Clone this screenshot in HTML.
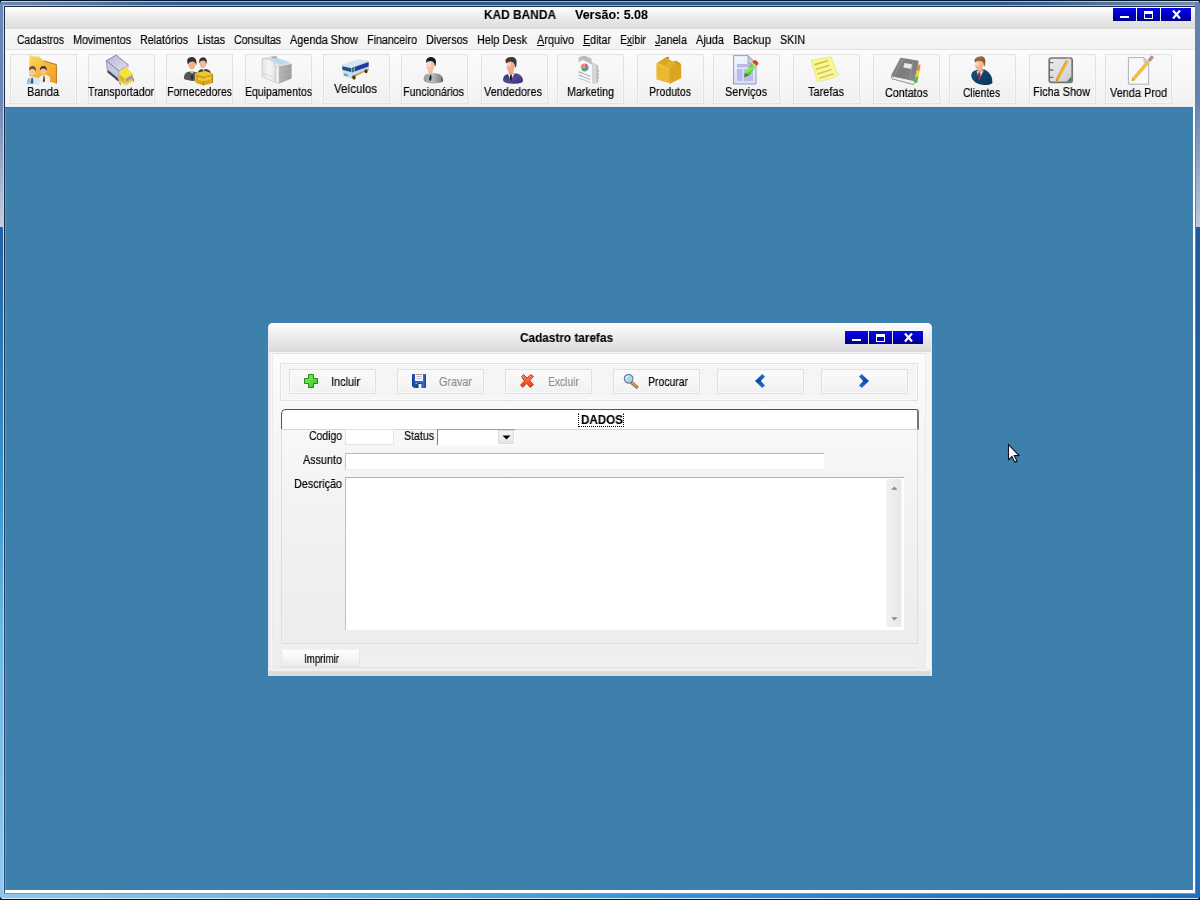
<!DOCTYPE html>
<html><head><meta charset="utf-8"><title>KAD BANDA</title>
<style>
html,body{margin:0;padding:0}
body{width:1200px;height:900px;overflow:hidden;position:relative;background:#3c80ab;font-family:"Liberation Sans",sans-serif;font-size:11px;color:#000}
.a{position:absolute}
.t{position:absolute;white-space:nowrap;line-height:1;height:1em;transform-origin:0 0;will-change:transform;-webkit-text-stroke:0.18px currentColor}
u{text-decoration:underline;text-underline-offset:1px}
.cb{height:13px;background:linear-gradient(#0808f0 0,#0000c8 45%,#00008c 100%)}
.cb i,.cb svg{display:block}
.tb{width:65px;height:48px;border:1px solid #e1e1e1;background:linear-gradient(#fafafa,#f4f4f4 60%,#efefef);box-shadow:inset 0 0 0 1px #f8f8f8}
.bt{width:85px;height:23px;border:1px solid #e0e0e0;background:linear-gradient(#fafafa,#f5f5f5 60%,#f0f0f0);box-shadow:inset 0 0 0 1px #f9f9f9}
</style></head><body>

<!-- outer window frame -->
<div class="a" style="left:0;top:0;width:1200px;height:7px;background:linear-gradient(90deg,#7088a8 0,#5c7aa2 6%,#3a6294 12%,#28588c 18%,#28588c 82%,#3a6294 88%,#5c7aa2 94%,#7890b0 100%)"></div>
<div class="a" style="left:0;top:0;width:1200px;height:1px;background:#06182c"></div>
<div class="a" style="left:1px;top:1px;width:1198px;height:1px;background:linear-gradient(90deg,#c4d4f0 0,#98b6da 18%,#94b4d8 82%,#c0d0ec 100%)"></div>
<div class="a" style="left:3px;top:5px;width:1193px;height:1px;background:linear-gradient(90deg,#b4c8e8 0,#8cb4e4 18%,#8cb4e4 82%,#b0c4e4 100%)"></div>
<div class="a" style="left:4px;top:6px;width:1191px;height:1px;background:#1c2c48"></div>
<!-- left border -->
<div class="a" style="left:0;top:2px;width:3px;height:225px;background:linear-gradient(#6a86b4 0,#6a86b4 98px,#c4cee0 225px)"></div>
<div class="a" style="left:0;top:227px;width:3px;height:671px;background:linear-gradient(#2060a8 0,#3a9ad0 273px,#6cb8e0 403px,#90c8f0 100%)"></div>
<div class="a" style="left:3px;top:6px;width:1px;height:892px;background:#c0d8f8"></div>
<div class="a" style="left:4px;top:7px;width:1px;height:887px;background:linear-gradient(#1c2c48 0,#1c2c48 220px,#2c4c7c 100%)"></div>
<!-- right border -->
<div class="a" style="left:1195px;top:2px;width:5px;height:225px;background:linear-gradient(#6482b0 0,#6482b0 98px,#bcc8de 225px)"></div>
<div class="a" style="left:1195px;top:227px;width:5px;height:671px;background:linear-gradient(#1c5a9c,#2062a8 200px,#2070c0)"></div>
<div class="a" style="left:1195px;top:107px;width:1px;height:787px;background:#6880a0"></div>
<!-- bottom border -->
<div class="a" style="left:0;top:893px;width:1200px;height:5px;background:linear-gradient(90deg,#8cc8ea 0,#68b8e4 25%,#3c98d8 50%,#2478c8 80%,#2070c0)"></div>
<div class="a" style="left:4px;top:893px;width:1192px;height:1px;background:#8098b0"></div>
<div class="a" style="left:2px;top:898px;width:1196px;height:1px;background:#d8e8f8"></div>
<div class="a" style="left:0;top:899px;width:1200px;height:1px;background:#0c1424"></div>
<!-- MDI client -->
<div class="a" style="left:5px;top:107px;width:1190px;height:786px;background:#fff"></div>
<div class="a" style="left:5px;top:107px;width:1188px;height:783px;background:#6c92b0"></div>
<div class="a" style="left:5px;top:107px;width:1188px;height:1px;background:#4e7392"></div>
<div class="a" style="left:6px;top:108px;width:1187px;height:782px;background:#3c80ab"></div>
<!-- title bar -->
<div class="a" style="left:5px;top:7px;width:1190px;height:22px;background:linear-gradient(#ffffff 0,#f4f4f4 25%,#e4e4e4 70%,#dcdcdc 100%)"></div>
<span class="t" style="left:483.5px;top:9.42px;font-size:12.5px;transform:scaleX(0.9513);font-weight:bold;-webkit-text-stroke:0.1px currentColor;color:#000">KAD BANDA</span>
<span class="t" style="left:574.5px;top:9.42px;font-size:12.5px;transform:scaleX(1.0005);font-weight:bold;-webkit-text-stroke:0.1px currentColor;color:#000">Versão: 5.08</span>
<!-- caption buttons -->
<div class="a cb" style="left:1113px;top:8px;width:23px"><i class="a" style="left:7px;top:8px;width:9px;height:2px;background:#fff"></i></div>
<div class="a cb" style="left:1137px;top:8px;width:23px"><i class="a" style="left:7px;top:3px;width:7px;height:4px;border:1px solid #fff;border-top-width:3px"></i></div>
<div class="a cb" style="left:1161px;top:8px;width:30px"><svg class="a" style="left:11px;top:2px" width="9" height="9" viewBox="0 0 9 9"><path d="M1 0.5L8 8.5M8 0.5L1 8.5" stroke="#fff" stroke-width="2.2"/></svg></div>
<!-- menu bar -->
<div class="a" style="left:5px;top:29px;width:1190px;height:21px;background:linear-gradient(#f8f8f8,#f1f1f1)"></div>
<div class="a" style="left:5px;top:49px;width:1190px;height:1px;background:#e2e2e2"></div>
<span class="t" style="left:16.5px;top:34.42px;font-size:12.5px;transform:scaleX(0.8250);color:#000">Cadastros</span>
<span class="t" style="left:72.5px;top:34.42px;font-size:12.5px;transform:scaleX(0.8608);color:#000">Movimentos</span>
<span class="t" style="left:139.5px;top:34.42px;font-size:12.5px;transform:scaleX(0.8530);color:#000">Relatórios</span>
<span class="t" style="left:196.5px;top:34.42px;font-size:12.5px;transform:scaleX(0.8575);color:#000">Listas</span>
<span class="t" style="left:233.5px;top:34.42px;font-size:12.5px;transform:scaleX(0.8456);color:#000">Consultas</span>
<span class="t" style="left:289.5px;top:34.42px;font-size:12.5px;transform:scaleX(0.8736);color:#000">Agenda Show</span>
<span class="t" style="left:366.5px;top:34.42px;font-size:12.5px;transform:scaleX(0.8568);color:#000">Financeiro</span>
<span class="t" style="left:425.5px;top:34.42px;font-size:12.5px;transform:scaleX(0.8639);color:#000">Diversos</span>
<span class="t" style="left:476.5px;top:34.42px;font-size:12.5px;transform:scaleX(0.8672);color:#000">Help Desk</span>
<span class="t" style="left:536.5px;top:34.42px;font-size:12.5px;transform:scaleX(0.8730);color:#000"><u>A</u>rquivo</span>
<span class="t" style="left:582.5px;top:34.42px;font-size:12.5px;transform:scaleX(0.8575);color:#000"><u>E</u>ditar</span>
<span class="t" style="left:619.5px;top:34.42px;font-size:12.5px;transform:scaleX(0.8319);color:#000">E<u>x</u>ibir</span>
<span class="t" style="left:654.5px;top:34.42px;font-size:12.5px;transform:scaleX(0.8688);color:#000"><u>J</u>anela</span>
<span class="t" style="left:695.5px;top:34.42px;font-size:12.5px;transform:scaleX(0.8758);color:#000">Ajuda</span>
<span class="t" style="left:732.5px;top:34.42px;font-size:12.5px;transform:scaleX(0.9114);color:#000">Backup</span>
<span class="t" style="left:779.5px;top:34.42px;font-size:12.5px;transform:scaleX(0.8569);color:#000">SKIN</span>
<!-- rounded outer corners -->
<svg class="a" style="left:0;top:0" width="4" height="4" viewBox="0 0 4 4"><path d="M0 0H3.4Q.6 .6 0 3.4Z" fill="#06182c"/></svg>
<svg class="a" style="left:1196px;top:0" width="4" height="4" viewBox="0 0 4 4"><path d="M4 0H.6Q3.4 .6 4 3.4Z" fill="#06182c"/></svg>
<svg class="a" style="left:0;top:896px" width="4" height="4" viewBox="0 0 4 4"><path d="M0 4H3.4Q.6 3.4 0 .6Z" fill="#06182c"/></svg>
<svg class="a" style="left:1196px;top:896px" width="4" height="4" viewBox="0 0 4 4"><path d="M4 4H.6Q3.4 3.4 4 .6Z" fill="#06182c"/></svg>

<!-- toolbar -->
<div class="a" style="left:5px;top:50px;width:1190px;height:57px;background:linear-gradient(#fcfcfc,#f5f4f4 80%,#f2eeee)"></div>
<div class="a tb" style="left:10px;top:54px"></div>
<svg class="a" style="left:27px;top:54px" width="32" height="32" viewBox="0 0 32 32"><defs><linearGradient id="gfo" x1="0" y1="0" x2="1" y2="1"><stop offset="0" stop-color="#f8d860"/><stop offset=".5" stop-color="#f4b838"/><stop offset="1" stop-color="#f09c28"/></linearGradient></defs><path d="M2.4 1.4L12.5 2.8L16.5 6.6L29.6 10.4V29.6L16 26.5L2.4 22Z" fill="url(#gfo)"/><path d="M16.5 6.8L29.4 10.6V29.4" stroke="#b87818" stroke-width="1" fill="none"/><path d="M2.8 1.8L12.4 3.2L16.3 7" stroke="#fce890" stroke-width=".8" fill="none"/>
<path d="M11.5 27.5Q12 22 15 21.5L19.5 21L22.5 22.5Q23.5 25 23 28.5L12.5 29Z" fill="#f4eee8"/><path d="M16.6 22L17.6 22L18 27L16.8 28.5L15.8 27Z" fill="#5c4038"/>
<ellipse cx="16.4" cy="16.8" rx="3" ry="3.6" fill="#f0c4a4"/><path d="M13 16.5Q12.6 12 16.4 12Q20.2 12 19.8 17Q18.6 14.4 16 14.6Q14 14.8 13 16.5Z" fill="#4c3420"/>
<path d="M-.5 29Q-.4 24 3 23.5L8 23L12 24Q13 27 12.8 30.5L0 30.5Z" fill="#dce6f0"/><path d="M-.3 28.5Q0 24.5 3 23.8L4 29.5L0 30Z" fill="#9cbcd8"/><path d="M4.4 24L5.8 24L6.4 28.5L5 30.3L3.8 28.5Z" fill="#2c5c8c"/>
<ellipse cx="5.4" cy="17.4" rx="3" ry="3.7" fill="#f4c8a8"/><path d="M2.2 16.6Q1.6 12 5.6 12Q9.6 12 9 17.6Q8 14.8 5.4 15Q3.2 15 2.2 16.6Z" fill="#7c5424"/></svg>
<span class="t" style="left:26.5px;top:86.42px;font-size:12.5px;transform:scaleX(0.8854);color:#000">Banda</span>
<div class="a tb" style="left:88px;top:54px"></div>
<svg class="a" style="left:105px;top:54px" width="32" height="32" viewBox="0 0 32 32"><defs><linearGradient id="gtr1" x1="0" y1="0" x2="1" y2="1"><stop offset="0" stop-color="#b4b4d4"/><stop offset="1" stop-color="#e4e0f0"/></linearGradient></defs>
<path d="M1.2 6.8L11 1L23.5 11L14 17Z" fill="url(#gtr1)" stroke="#70708c" stroke-width=".8"/>
<path d="M1.2 6.8L14 17L13.5 27L2.6 18.5Z" fill="#c4c8e0" stroke="#70708c" stroke-width=".6"/>
<path d="M2.8 16L13.4 24.6L13.4 27L2.8 18.6Z" fill="#3c4460"/><path d="M10 22.8L13.4 25.4V27.6L10 25Z" fill="#3c58c0"/>
<path d="M14 17L23.5 11L24 14L15 20Z" fill="#d8d0e8"/>
<g transform="translate(13.5,0) scale(.88,1) translate(-14.5,0)"><path d="M14.5 19L22.5 13L30.5 19.5L22 24.5Z" fill="#f4e438"/>
<path d="M14.5 19L22 24.5L22.5 31.5L16 28.5L14.2 25Z" fill="#e8c828"/>
<path d="M22 24.5L30.5 19.5L31.6 26L22.5 31.5Z" fill="#e4cc40"/>
<path d="M23 25L30 21L30.6 24L23.4 28Z" fill="#a494b4"/><path d="M16.2 21.4L21 25V28L16.4 24.8Z" fill="#c8b060"/>
<path d="M17 27.5L23 30.8L31.8 25.6L31.6 28L22.6 32L16.6 29.5Z" fill="#f0e494"/>
<path d="M15.5 27.5L17.5 31.5L15.8 30Z" fill="#40340c"/><path d="M31 24L31.8 27.5" stroke="#5c5010" stroke-width=".8"/></g></svg>
<span class="t" style="left:87.5px;top:86.42px;font-size:12.5px;transform:scaleX(0.8457);color:#000">Transportador</span>
<div class="a tb" style="left:166px;top:54px"></div>
<svg class="a" style="left:183px;top:54px" width="32" height="32" viewBox="0 0 32 32">
<path d="M14.5 20Q15 15.5 19 15L23 15Q27 15.5 28 19V22H14.5Z" fill="#4c4830"/><path d="M19.4 14.6L20.6 17.5L21.8 14.6Z" fill="#f0e8e0"/>
<ellipse cx="19.9" cy="9.6" rx="3.3" ry="4.4" fill="#f0b8a0"/><path d="M16.2 9.4Q15.6 3.2 20.2 3.2Q24.6 3.4 23.8 10.6Q22.6 6.4 19.8 6.6Q17.2 6.6 16.2 9.4Z" fill="#3c3428"/>
<path d="M.8 24.5Q1 19 4.6 18L8.8 17.2L13.4 18.2Q16.4 19.6 16.4 24.5L15.5 26.5L9 27L2 25.5Z" fill="#545454"/><path d="M7.2 17.5L9 22L10.8 17.5Z" fill="#f4f0ec"/><path d="M8.5 18.4L9.5 18.4L10 24L9 26L8 24Z" fill="#2c2420"/>
<ellipse cx="8.9" cy="10.6" rx="3.7" ry="4.8" fill="#f4b090"/><path d="M4.8 10.4Q3.4 6 5 4.6Q6 2.8 9.4 3Q14.2 3.4 13.4 11.4Q12.4 7.4 9 7.6Q6 7.6 4.8 10.4Z" fill="#34302c"/>
<path d="M12.4 19.2L22 17L29.8 19.8V29L20.4 31.4L12.4 28.8Z" fill="#d8a818"/><path d="M12.4 19.2L22 17L29.8 19.8L20.4 22.4Z" fill="#ecc838"/><path d="M20.4 22.4V31.4" stroke="#a87c10" stroke-width=".7"/><path d="M15 23.4L20.4 24.8L28 22.6V25L20.4 27.2L15 25.8Z" fill="#f0d050" opacity=".85"/><path d="M12.4 19.2V28.8" stroke="#f4dc70" stroke-width=".8"/><path d="M29.6 20V29" stroke="#a07810" stroke-width=".8"/></svg>
<span class="t" style="left:166.5px;top:86.42px;font-size:12.5px;transform:scaleX(0.8429);color:#000">Fornecedores</span>
<div class="a tb" style="left:245px;top:54px"></div>
<svg class="a" style="left:261px;top:54px" width="32" height="32" viewBox="0 0 32 32"><defs><linearGradient id="geq1" x1="0" y1="0" x2="1" y2="0"><stop offset="0" stop-color="#e4e4e4"/><stop offset=".5" stop-color="#f6f6f6"/><stop offset="1" stop-color="#e0e0e0"/></linearGradient><linearGradient id="geq2" x1="0" y1="0" x2="1" y2="0"><stop offset="0" stop-color="#b4b4b4"/><stop offset="1" stop-color="#9c9c9c"/></linearGradient></defs>
<path d="M1.2 4.5L9 2.4L15 2L16.8 4L29 8L30.6 10L18 12.6L15 10Z" fill="#d8e0e4"/><path d="M11.5 4.4L17 4.6L27.6 8.4L17.8 10.8Q13.5 8 11.5 4.4Z" fill="#b8d8ec"/><path d="M10 2.6L15.4 2.2L16.6 4.2L11.4 4.4Z" fill="#a8b4bc"/>
<path d="M1.2 4.5Q9 4.4 12.5 8Q14.6 10.4 15 14V28.6L1.2 22.6Z" fill="url(#geq1)" stroke="#c0c0c0" stroke-width=".7"/><path d="M2 19L14 24.4" stroke="#d0d0d0" stroke-width=".7"/>
<path d="M15 12L18 12.6V29.8L15 28.6Z" fill="#f4f4f4" stroke="#b8b8b8" stroke-width=".5"/>
<path d="M18 12.6L30.6 10V24.4L18 29.8Z" fill="url(#geq2)"/><path d="M18.4 17L30.4 14.2M18.4 22L30.4 19.2" stroke="#b8b8b8" stroke-width=".7"/></svg>
<span class="t" style="left:244.5px;top:86.42px;font-size:12.5px;transform:scaleX(0.8384);color:#000">Equipamentos</span>
<div class="a tb" style="left:323px;top:54px"></div>
<svg class="a" style="left:340px;top:58px" width="30" height="22" viewBox="0 0 30 22">
<path d="M2 6.6L18 1L28.6 2.6L11.6 8.8Z" fill="#d4e6f4"/>
<path d="M1.8 6.8L11.6 8.8L11.4 20.6L3 18Z" fill="#c4dcf0"/><path d="M2.2 8.2L11.2 10.2L11 14L2.4 11.8Z" fill="#244c84"/><path d="M4 15.2L8 16.4L8 18.6L4 17.4Z" fill="#8898a8"/>
<path d="M11.6 8.8L28.6 2.6L28.8 11.8L11.4 20.6Z" fill="#c8daf0"/><path d="M11.8 10L28.6 4L28.6 8.4L11.8 14.4Z" fill="#1c3ca4"/><path d="M13.6 9.4L14.6 9L14.6 13.4L13.6 13.8Z" fill="#c8daf0"/><path d="M11.8 10.2L13.4 9.6V13.8L11.8 14.4Z" fill="#1c7c70"/>
<path d="M11.6 18L28.8 10.4L28.8 12L11.6 20.2Z" fill="#d4a434"/>
<ellipse cx="14" cy="19.6" rx="1.7" ry="2.1" fill="#4c3818"/><ellipse cx="26" cy="13.2" rx="1.5" ry="2" fill="#3c3020"/></svg>
<span class="t" style="left:333.5px;top:83.42px;font-size:12.5px;transform:scaleX(0.9100);color:#000">Veículos</span>
<div class="a tb" style="left:401px;top:54px"></div>
<svg class="a" style="left:418px;top:54px" width="32" height="32" viewBox="0 0 32 32"><defs><linearGradient id="gfu" x1="0" y1="0" x2="1" y2="0"><stop offset="0" stop-color="#9c9ca4"/><stop offset=".5" stop-color="#b8b4bc"/><stop offset=".85" stop-color="#888c90"/><stop offset="1" stop-color="#4c5454"/></linearGradient></defs>
<path d="M5.6 25.5Q5.4 21 9.5 19.8L14 19L19.5 19.6Q24 21 25 25Q25.4 27 24.6 28Q20 29.6 14.5 29.4Q9 29 6.4 27.4Z" fill="url(#gfu)"/>
<path d="M10.4 19.4L12.6 24L15 19.4Z" fill="#ece8e8"/><path d="M12 20.4L13.4 20.4L13.6 25L12.2 27.2L11 25Z" fill="#1c2c30"/>
<path d="M10.4 15L10.6 19.6L14.4 19.6L15 15Z" fill="#f0b898"/>
<ellipse cx="12.4" cy="11.8" rx="4" ry="5.4" fill="#f8c0a0"/><ellipse cx="11" cy="10.4" rx="2" ry="3" fill="#fce0d0" opacity=".8"/>
<path d="M8.2 9Q7.6 5.4 9.4 4.2Q11.6 2.6 14.6 3.2Q18 4 18 8.6Q18 11 17 12.6L16.2 9.2Q14.6 6.6 12 7Q9.6 7.2 8.2 9Z" fill="#1c1c1c"/></svg>
<span class="t" style="left:402.5px;top:86.42px;font-size:12.5px;transform:scaleX(0.8524);color:#000">Funcionários</span>
<div class="a tb" style="left:481px;top:54px"></div>
<svg class="a" style="left:498px;top:54px" width="32" height="32" viewBox="0 0 32 32"><defs><linearGradient id="gve" x1="0" y1="0" x2="1" y2="1"><stop offset="0" stop-color="#2c2c64"/><stop offset=".5" stop-color="#544c94"/><stop offset="1" stop-color="#30286c"/></linearGradient></defs>
<path d="M5 26Q5 21.4 9.4 20.2L13 19.4L19 19.6Q23.6 21 24.8 25Q25.2 27.4 24.2 28.4Q19.6 30 14.4 29.8Q8.6 29.6 5.8 27.8Z" fill="url(#gve)"/>
<path d="M9.8 19.8L12.6 26.4L16.6 19.6Z" fill="#f0eef4"/><path d="M12.2 20.6L13.8 20.6L14 25L12.8 27.6L11.8 25Z" fill="#1c2418"/>
<path d="M10.6 16L10.8 20L15 20L15.6 16Z" fill="#e8a080"/>
<ellipse cx="12.6" cy="12.6" rx="3.9" ry="5.4" fill="#f4a888"/><ellipse cx="11" cy="10.6" rx="1.8" ry="2.6" fill="#fcdcc0" opacity=".8"/>
<path d="M8.4 9.6Q6.4 6 8.4 4.8Q10.4 2.6 14.4 3Q19 3.8 18.6 9Q18.6 12.4 17.2 14L16.4 10Q15 7.2 12.4 7.4Q9.8 7.4 8.4 9.6Z" fill="#3c3834"/></svg>
<span class="t" style="left:483.5px;top:86.42px;font-size:12.5px;transform:scaleX(0.8693);color:#000">Vendedores</span>
<div class="a tb" style="left:557px;top:54px"></div>
<svg class="a" style="left:574px;top:54px" width="32" height="32" viewBox="0 0 32 32">
<path d="M4.6 3.4L10 1.6L17.4 4.4L17.6 8L24.2 11.4V28.6L20 29.6L17.6 28L4.6 9.4Z" fill="#bcbcbc"/><path d="M17.6 8L22.4 10.6V29L19 29.6V12Z" fill="#d8d8d8"/><path d="M23 17H25M23 20.4H25M23 23.8H25" stroke="#a4a4a4" stroke-width="1"/>
<path d="M2.6 9L9 6L18.6 10.8V29.4L14 28L2.6 23.2Z" fill="#f6f8fa"/><path d="M18.6 10.8V29.4" stroke="#c4c4c4" stroke-width=".6"/>
<g opacity=".8"><path d="M10.6 13.6L10.6 9.6A4 4 0 0 1 14.4 12.4Z" fill="#e0344c"/><path d="M10.6 13.6L6.6 13.2A4 4 0 0 1 10.6 9.6Z" fill="#f0607c"/><path d="M10.6 13.6L14.4 12.4A4 4 0 0 1 11.4 17.4Z" fill="#1c78c8"/><path d="M10.6 13.6L11.4 17.4A4 4 0 0 1 6.6 13.2Z" fill="#209c28"/><path d="M6.4 13L7.6 16" stroke="#e8f060" stroke-width="1.2"/>
</g><g opacity=".6"><path d="M4.6 17.8L16.4 22.2" stroke="#c06878" stroke-width="1.1"/><path d="M4.6 17.8L8 19" stroke="#7088b8" stroke-width="1.1"/>
<path d="M4.6 21L16.4 25.4" stroke="#68a888" stroke-width="1.1"/><path d="M4.6 21L8 22.2" stroke="#6c8cb0" stroke-width="1.1"/>
<path d="M4.6 24L16.4 28.4" stroke="#a8a0b0" stroke-width="1.1"/></g></svg>
<span class="t" style="left:566.5px;top:86.42px;font-size:12.5px;transform:scaleX(0.8564);color:#000">Marketing</span>
<div class="a tb" style="left:637px;top:54px"></div>
<svg class="a" style="left:654px;top:54px" width="32" height="32" viewBox="0 0 32 32">
<path d="M4 8.4L10 4.4L13 2.8L14.8 3.2L15 6L20 7.4L22 6.6L27 10L16.4 14.8L4 11Z" fill="#c89418"/><path d="M5 8.6L12.6 3L14.6 3.4L14.8 6.4L10 11Z" fill="#d8a828"/><path d="M12.4 3.2L14.6 2.8L14.8 5.6" fill="#a88c48"/>
<path d="M2.4 9.4Q2.6 8.4 4 8.6L10 11L16 14.6L16.4 29.6L2.8 25.6Q2.2 25.4 2.4 24.6Z" fill="#ecb830"/>
<path d="M16 14.6L22 9.4L26.4 10Q27.2 10.2 27.2 11.2V23.4Q27.2 24.2 26.6 24.6L16.4 29.6Z" fill="#dca420"/>
<path d="M10 11L15 6.4L20 7.6L22 9.4L16 14.6Z" fill="#e4b02c"/>
<path d="M16.2 15V29.4" stroke="#c8941c" stroke-width=".7"/><path d="M3 10.4L15.6 15.2" stroke="#f4cc58" stroke-width=".7"/></svg>
<span class="t" style="left:648.5px;top:86.42px;font-size:12.5px;transform:scaleX(0.8395);color:#000">Produtos</span>
<div class="a tb" style="left:713px;top:54px"></div>
<svg class="a" style="left:730px;top:54px" width="32" height="32" viewBox="0 0 32 32"><defs><linearGradient id="gse" x1="0" y1="0" x2="0" y2="1"><stop offset="0" stop-color="#f4f6fc"/><stop offset="1" stop-color="#d4def4"/></linearGradient><linearGradient id="gse2" x1="0" y1="0" x2="1" y2="1"><stop offset="0" stop-color="#48b428"/><stop offset=".45" stop-color="#88f060"/><stop offset="1" stop-color="#3c9c24"/></linearGradient></defs>
<path d="M3.6 1.6H18L26 9.6V30H3.6Z" fill="url(#gse)" stroke="#8c94ac" stroke-width=".9"/><path d="M18 1.6V9.6H26Z" fill="#c4cce0" stroke="#8c94ac" stroke-width=".7"/>
<rect x="7" y="10" width="15" height="3.4" fill="#bcb8e4"/><rect x="7" y="15" width="16" height="12" fill="#b8bcec"/><rect x="12.4" y="15" width="1.4" height="12" fill="#dce0f8"/>
<g transform="rotate(38 19.5 16.5)"><rect x="16.9" y="9" width="5.2" height="13" rx="1.6" fill="url(#gse2)"/><path d="M17.2 21L19.5 25.4L21.8 21Z" fill="#3c8c28"/><rect x="16.6" y="4.6" width="5.8" height="5" rx="2" fill="#d44434"/><rect x="16.9" y="8.4" width="5.2" height="1.4" fill="#f0e0c0"/></g></svg>
<span class="t" style="left:724.5px;top:86.42px;font-size:12.5px;transform:scaleX(0.8763);color:#000">Serviços</span>
<div class="a tb" style="left:793px;top:54px"></div>
<svg class="a" style="left:810px;top:54px" width="32" height="32" viewBox="0 0 32 32"><defs><linearGradient id="gta" x1="0" y1="0" x2="1" y2="1"><stop offset="0" stop-color="#fcf878"/><stop offset="1" stop-color="#f8f4a8"/></linearGradient></defs>
<path d="M1 6.2L21.2 2.8L25 13Q26 18 29.2 20.6Q24 24 18 25.4L7.4 27.6Z" fill="url(#gta)" stroke="#e4dc80" stroke-width=".6"/>
<path d="M4.4 10.8L18 6.6" stroke="#c4bc40" stroke-width="1.5"/><path d="M5.8 15.4L19.6 11.2" stroke="#ccc458" stroke-width="1.5"/><path d="M7.4 20L21.4 15.6" stroke="#ccc458" stroke-width="1.5"/><path d="M9.4 24.4L23.4 19.8" stroke="#d0c868" stroke-width="1.5"/></svg>
<span class="t" style="left:807.5px;top:86.42px;font-size:12.5px;transform:scaleX(0.8783);color:#000">Tarefas</span>
<div class="a tb" style="left:873px;top:54px"></div>
<svg class="a" style="left:890px;top:54px" width="32" height="32" viewBox="0 0 32 32"><defs><linearGradient id="gco" x1="0" y1="0" x2="1" y2="1"><stop offset="0" stop-color="#8c8c8c"/><stop offset=".5" stop-color="#7c7c7c"/><stop offset="1" stop-color="#8a8a8a"/></linearGradient></defs>
<path d="M27.6 10.4L30.6 10.8L29.6 17L26.6 16.6Z" fill="#f08838"/><path d="M26.6 16.4L29.6 16.8L28.4 23L25.4 22.6Z" fill="#f4d428"/><path d="M25.4 22.4L28.4 22.8L27.2 29L24.2 28.6Z" fill="#48c838"/>
<path d="M1.4 22L2 24.8L23.4 30.6L24.6 28.6L24.6 26Z" fill="#f0f0f0" stroke="#686868" stroke-width=".7"/>
<path d="M10 4.4Q10.4 3.6 11.4 3.8L27.6 6.4Q28.8 6.6 28.6 7.8L24.6 26.2Q24.4 27.2 23.2 26.9L2 22Q1 21.6 1.6 20.6Z" fill="url(#gco)"/>
<path d="M23.4 6.4L19.6 25.6" stroke="#949494" stroke-width="1"/><path d="M12.4 5L4.4 21.6" stroke="#969696" stroke-width=".7"/>
<path d="M14.4 9L22 10.2L21.2 15L13.4 13.6Z" fill="#e8e8e8"/></svg>
<span class="t" style="left:884.5px;top:87.42px;font-size:12.5px;transform:scaleX(0.8595);color:#000">Contatos</span>
<div class="a tb" style="left:949px;top:54px"></div>
<svg class="a" style="left:966px;top:54px" width="32" height="32" viewBox="0 0 32 32"><defs><linearGradient id="gcl" x1="0" y1="0" x2="1" y2="1"><stop offset="0" stop-color="#185478"/><stop offset=".5" stop-color="#0c4468"/><stop offset="1" stop-color="#0c3458"/></linearGradient></defs>
<path d="M5.2 22Q5.4 17.6 9 16.6L12 15.6L18.6 15.4Q23 17.4 25 21.6Q26.8 25.4 26.4 29Q24 31.2 18 31Q11 30.6 8.4 27.6Q5.6 25 5.2 22Z" fill="url(#gcl)"/>
<path d="M10.6 17L13 26L17.6 16.4Z" fill="#f4d4e0"/><path d="M12.4 18.4L14.2 18.4L14.6 22.6L12.8 26.4L11.4 22.6Z" fill="#8c2444"/>
<path d="M11.4 14.6L11.6 18L16 18L16.6 14Z" fill="#e8a480"/>
<ellipse cx="13.2" cy="11.4" rx="3.9" ry="5" fill="#f4b494"/><ellipse cx="11.6" cy="10" rx="1.8" ry="2.4" fill="#fcd8c0" opacity=".7"/>
<path d="M9.2 8.6Q7.6 6.8 9 5Q11 2.2 15.4 2.2Q19.4 2.8 19.4 7.4Q19.4 11 18 13L17.2 8.8Q15.6 6.6 13 6.8Q10.4 7 9.2 8.6Z" fill="#8c5c34"/><path d="M10 5.4Q12 3.4 15.4 3.4" stroke="#b08050" stroke-width="1" fill="none"/></svg>
<span class="t" style="left:962.5px;top:87.42px;font-size:12.5px;transform:scaleX(0.8193);color:#000">Clientes</span>
<div class="a tb" style="left:1029px;top:54px"></div>
<svg class="a" style="left:1045px;top:54px" width="32" height="32" viewBox="0 0 32 32"><defs><linearGradient id="gfi" x1="0" y1="0" x2="1" y2="1"><stop offset="0" stop-color="#ececec"/><stop offset=".6" stop-color="#dcdce0"/><stop offset="1" stop-color="#c8ccc8"/></linearGradient></defs>
<rect x="4.2" y="4" width="23" height="24.4" rx="2.2" fill="url(#gfi)" stroke="#747474" stroke-width="1.7"/>
<path d="M22 27.4L26.4 22.6V27.4Z" fill="#586860"/>
<path d="M4.4 8.6H8.4M4.4 16H8.4M4.4 23.4H8.4" stroke="#707070" stroke-width="1.4"/>
<path d="M12 26L22.4 6.4" stroke="#e8a020" stroke-width="3"/><path d="M12.8 25.4L22.8 6.8" stroke="#f8c850" stroke-width="1"/><path d="M22 7.2L24 3.6L20.2 6Z" fill="#e8d0a0"/><path d="M11 27.2L12.8 26.4L11.4 25.2Z" fill="#b07818"/></svg>
<span class="t" style="left:1032.5px;top:86.42px;font-size:12.5px;transform:scaleX(0.8728);color:#000">Ficha Show</span>
<div class="a tb" style="left:1105px;top:54px"></div>
<svg class="a" style="left:1122px;top:54px" width="32" height="32" viewBox="0 0 32 32">
<path d="M6.4 3.6H22L26.6 8.4V30.2H6.4Z" fill="#f8f8fc" stroke="#a8a8b0" stroke-width=".9"/><path d="M22 3.6V8.4H26.6Z" fill="#dcd8d0" stroke="#b4b0a8" stroke-width=".6"/>
<path d="M11 25.6L26.6 7.4" stroke="#f0b030" stroke-width="3.2"/><path d="M11.6 25L26.8 7.4" stroke="#fcd868" stroke-width="1"/><path d="M25.8 8.2L28.4 5.2" stroke="#e0d0b0" stroke-width="3.4"/><path d="M27.8 5.8L29.8 3.4" stroke="#c48c90" stroke-width="3.4" stroke-linecap="round"/>
<path d="M9.6 27.2L12.2 26.2L10.2 24.4Z" fill="#c8902c"/></svg>
<span class="t" style="left:1109.5px;top:87.42px;font-size:12.5px;transform:scaleX(0.8725);color:#000">Venda Prod</span>

<!-- child window: Cadastro tarefas -->
<div class="a" style="left:268px;top:323px;width:664px;height:353px;background:#f6f6f6;border-radius:5px 5px 0 0;overflow:hidden">
  <div class="a" style="left:0;top:0;width:664px;height:29px;background:linear-gradient(#fefefe 0,#f3f3f3 30%,#e6e6e6 65%,#dadada 100%)"></div>
  <div class="a" style="left:0;top:0;width:1px;height:353px;background:#e2e8fa"></div>
  <div class="a" style="left:1px;top:29px;width:2px;height:324px;background:#ececf0"></div>
  <div class="a" style="left:0;top:345px;width:664px;height:8px;background:linear-gradient(#f3f3f3 0,#f1f1f1 30%,#e0dedc 42%,#dcdad8 100%)"></div>
  <div class="a" style="left:663px;top:3px;width:1px;height:350px;background:#e4eafc"></div>
  <!-- inner frame line -->
  <div class="a" style="left:4px;top:30px;width:652px;height:314px;border:1px solid #ebebeb;border-top-color:#e0e0e0;background:linear-gradient(#fcfcfc 0,#f7f7f7 20%,#eeeeee 100%)"></div>
</div>
<span class="t" style="left:519.5px;top:332.42px;font-size:12.5px;transform:scaleX(0.9428);font-weight:bold;-webkit-text-stroke:0.1px currentColor;color:#000">Cadastro tarefas</span>
<div class="a cb" style="left:845px;top:331px;width:23px"><i class="a" style="left:7px;top:8px;width:9px;height:2px;background:#fff"></i></div>
<div class="a cb" style="left:869px;top:331px;width:23px"><i class="a" style="left:7px;top:3px;width:7px;height:4px;border:1px solid #fff;border-top-width:3px"></i></div>
<div class="a cb" style="left:893px;top:331px;width:30px"><svg class="a" style="left:11px;top:2px" width="9" height="9" viewBox="0 0 9 9"><path d="M1 0.5L8 8.5M8 0.5L1 8.5" stroke="#fff" stroke-width="2.2"/></svg></div>
<!-- toolbar panel -->
<div class="a" style="left:280px;top:363px;width:636px;height:36px;border:1px solid #e2e2e2;background:#f5f5f5;box-shadow:inset 0 0 0 1px #fafafa"></div>
<div class="a bt" style="left:289px;top:369px"></div>
<div class="a bt" style="left:397px;top:369px"></div>
<div class="a bt" style="left:505px;top:369px"></div>
<div class="a bt" style="left:613px;top:369px"></div>
<div class="a bt" style="left:717px;top:369px"></div>
<div class="a bt" style="left:821px;top:369px"></div>
<span class="t" style="left:330.5px;top:376.42px;font-size:12.5px;transform:scaleX(0.8698);color:#000">Incluir</span>
<span class="t" style="left:438.5px;top:376.42px;font-size:12.5px;transform:scaleX(0.8639);color:#8e8e8e">Gravar</span>
<span class="t" style="left:547.5px;top:376.42px;font-size:12.5px;transform:scaleX(0.8265);color:#8e8e8e">Excluir</span>
<span class="t" style="left:647.5px;top:376.42px;font-size:12.5px;transform:scaleX(0.8346);color:#000">Procurar</span>
<!-- tab header -->
<div class="a" style="left:281px;top:409px;width:635px;height:20px;background:#fff;border-top:1px solid #555;border-left:1px solid #555;border-right:2px solid #777;border-radius:5px 3px 0 0;box-sizing:content-box"></div>
<div class="a" style="left:578px;top:413px;width:44px;height:12px;border:1px dotted #000;border-top-color:transparent"></div>
<span class="t" style="left:580.5px;top:414.42px;font-size:12.5px;transform:scaleX(0.9304);font-weight:bold;-webkit-text-stroke:0.1px currentColor;color:#000">DADOS</span>
<!-- page -->
<div class="a" style="left:281px;top:429px;width:635px;height:213px;background:linear-gradient(#f8f8f8,#f2f2f2 40%,#ededed);border:1px solid #dedede;border-top:1px solid #d4d4d4"></div>
<span class="t" style="left:308.5px;top:430.42px;font-size:12.5px;transform:scaleX(0.8331);color:#000">Codigo</span>
<span class="t" style="left:403.5px;top:430.42px;font-size:12.5px;transform:scaleX(0.8466);color:#000">Status</span>
<span class="t" style="left:302.5px;top:454.42px;font-size:12.5px;transform:scaleX(0.8635);color:#000">Assunto</span>
<span class="t" style="left:293.5px;top:478.42px;font-size:12.5px;transform:scaleX(0.8638);color:#000">Descrição</span>
<div class="a" style="left:345px;top:429px;width:47px;height:14px;background:#fff;border:1px solid #e4e4e4;box-sizing:content-box"></div>
<div class="a" style="left:437px;top:429px;width:77px;height:15px;background:#fff;border-top:1px solid #a0a0a0;border-left:1px solid #808080;box-sizing:content-box"></div>
<div class="a" style="left:498px;top:430px;width:16px;height:14px;background:linear-gradient(#f6f6f6,#e4e4e4);border:1px solid #dcdcdc;box-sizing:border-box"><svg class="a" style="left:3px;top:4px" width="9" height="5" viewBox="0 0 9 5"><path d="M0.5 0.5H8.5L4.5 4.5Z" fill="#000"/></svg></div>
<div class="a" style="left:345px;top:453px;width:478px;height:15px;background:#fff;border-top:1px solid #b8b8b8;border-left:1px solid #c8c8c8;border-bottom:1px solid #ececec;box-sizing:content-box"></div>
<div class="a" style="left:345px;top:477px;width:558px;height:152px;background:#fff;border-top:1px solid #b0b0b0;border-left:1px solid #c0c0c0;box-sizing:content-box"></div>
<div class="a" style="left:886px;top:479px;width:16px;height:148px;background:linear-gradient(90deg,#f0f0f0,#e8e8e8);border-left:1px solid #f4f4f4;border-right:1px solid #f4f4f4;box-sizing:border-box"></div>
<svg class="a" style="left:890px;top:485px" width="9" height="6" viewBox="0 0 9 6"><path d="M1.2 4.8L4.4 1.4L7.6 4.8Z" fill="#8a8a8a"/></svg>
<svg class="a" style="left:890px;top:616px" width="9" height="6" viewBox="0 0 9 6"><path d="M1.2 1.2L4.4 4.6L7.6 1.2Z" fill="#8a8a8a"/></svg>
<!-- bottom bar -->
<div class="a" style="left:281px;top:649px;width:636px;height:19px;background:#efefef;border-bottom:1px solid #e2e2e2;box-sizing:border-box"></div>
<div class="a" style="left:281px;top:649px;width:79px;height:18px;background:linear-gradient(#ffffff,#f6f6f6 50%,#ebebeb);border:1px solid #e6e6e6;border-top-color:#f2f2f2;box-sizing:border-box"></div>
<span class="t" style="left:303.5px;top:653.42px;font-size:12.5px;transform:scaleX(0.7756);color:#000">Imprimir</span>

<!-- child toolbar icons -->
<svg class="a" style="left:304px;top:374px" width="14" height="14" viewBox="0 0 14 14"><defs><linearGradient id="gpl" x1="0" y1="0" x2="1" y2="1"><stop offset="0" stop-color="#8cf070"/><stop offset="1" stop-color="#34c418"/></linearGradient></defs><path d="M4.5 .5H9.5V4.5H13.5V9.5H9.5V13.5H4.5V9.5H.5V4.5H4.5Z" fill="url(#gpl)" stroke="#258a14"/></svg>
<svg class="a" style="left:412px;top:374px" width="14" height="14" viewBox="0 0 14 14"><defs><linearGradient id="gfl" x1="0" y1="0" x2="1" y2="0"><stop offset="0" stop-color="#143c90"/><stop offset=".3" stop-color="#3064c4"/><stop offset=".8" stop-color="#3c70d0"/><stop offset="1" stop-color="#184094"/></linearGradient></defs><path d="M0 1Q0 0 1 0H13Q14 0 14 1V13Q14 14 13 14H2L0 12Z" fill="url(#gfl)"/><rect x="3" y="0" width="8" height="7" fill="#f4f8fc"/><path d="M4.5 2.5H9.5M4.5 4.5H9.5" stroke="#a8b4c4" stroke-width=".8"/><path d="M4 0.5H10" stroke="#c88c98" stroke-width="1"/><rect x="3.5" y="9" width="7" height="5" fill="#1c448c"/><rect x="6.5" y="10" width="3" height="4" fill="#eef2f8"/><path d="M3.5 9.5L5 9.5" stroke="#9cc0f0"/></svg>
<svg class="a" style="left:520px;top:374px" width="14" height="14" viewBox="0 0 14 14"><defs><linearGradient id="gx" x1="0" y1="0" x2="0" y2="1"><stop offset="0" stop-color="#f48488"/><stop offset=".45" stop-color="#f8602c"/><stop offset="1" stop-color="#e84418"/></linearGradient></defs><path d="M3.6 .6L7 4L10.8 .6L13.4 2.4L9.8 6.6L13.4 10.8L10.2 13.4L6.8 9.4L2.6 13.4L.6 10.9L4.4 7L1.6 2.6Z" fill="url(#gx)" stroke="#b83018" stroke-width=".9" stroke-linejoin="round"/></svg>
<svg class="a" style="left:623px;top:373px" width="16" height="16" viewBox="0 0 16 16"><path d="M8.8 9.8L13.6 14" stroke="#9c6430" stroke-width="3.2" stroke-linecap="round"/><path d="M9 9.8L13.4 13.7" stroke="#e4a868" stroke-width="1.4" stroke-linecap="round"/><circle cx="5.6" cy="5.8" r="4.3" fill="#a8d4f0" stroke="#5c7488" stroke-width="1.1"/><path d="M2.8 6.4A3 3 0 0 1 6 3" stroke="#e4f4ff" stroke-width="1.2" fill="none"/></svg>
<svg class="a" style="left:754px;top:373px" width="12" height="16" viewBox="0 0 12 16"><defs><linearGradient id="gch" x1="0" y1="0" x2="0" y2="1"><stop offset="0" stop-color="#2c74d0"/><stop offset=".5" stop-color="#0c48a8"/><stop offset="1" stop-color="#2c80d8"/></linearGradient></defs><path d="M1 8L8.2 .9L11 3.4L6.8 8L11 12.5L8.2 15Z" fill="url(#gch)"/></svg>
<svg class="a" style="left:858px;top:373px" width="12" height="16" viewBox="0 0 12 16"><path d="M11 8L3.8 .9L1 3.4L5.2 8L1 12.5L3.8 15Z" fill="url(#gch)"/></svg>

<!-- mouse cursor -->
<svg class="a" style="left:1007px;top:443px" width="16" height="22" viewBox="0 0 16 22"><path d="M2.5 3.5L2.5 18.3L6 15.2L8.6 20.6L10.6 19.7L8.1 14.4L13 14.4Z" fill="#1a3850" opacity=".35"/><path d="M1.5 1.5L1.5 16.8L5 13.4L7.7 19L9.9 18L7.3 12.5L12 12.5Z" fill="#fff" stroke="#0a1428" stroke-width="1.1" stroke-linejoin="miter"/></svg>

</body></html>
